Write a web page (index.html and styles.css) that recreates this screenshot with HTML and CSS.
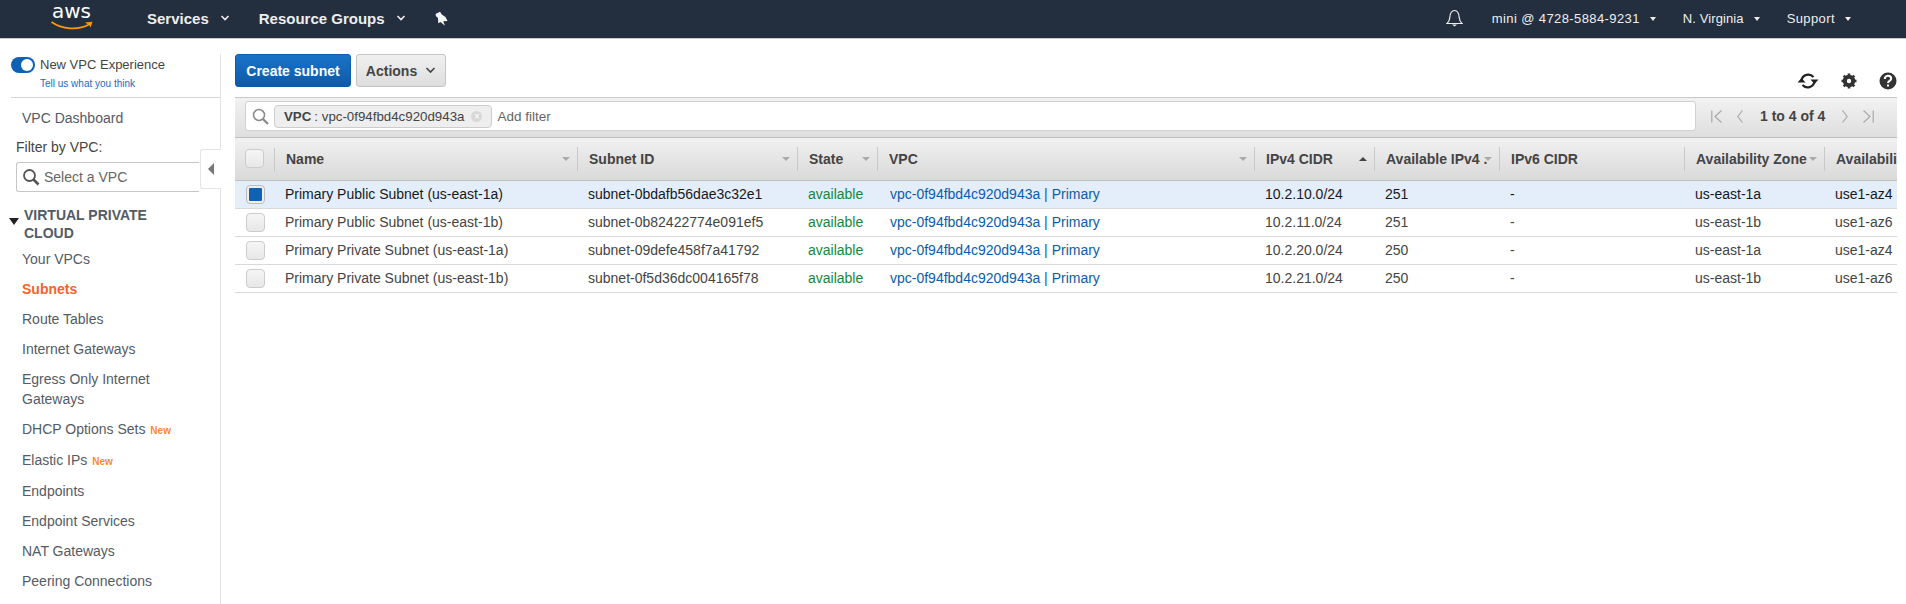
FILE: index.html
```html
<!DOCTYPE html>
<html lang="en">
<head>
    <meta charset="UTF-8">
    <title>Subnets | VPC Management Console</title>
    <link rel="stylesheet" href="styles.css">
</head>
<body>
    <header class="topnav">
        <div class="logo">
            <span class="logo-text">aws</span>
            <svg class="logo-smile" width="42" height="10" viewBox="0 0 42 10">
                <path d="M.5 1C11 8.500 27 9.500 38 3.500" fill="none" stroke="#f90" stroke-width="1.800"/>
                <path d="M34 1.500L41.500 .8L39.500 6.500C39 5 38 4 37.500 3.800Z" fill="#f90"/>
            </svg>
        </div>
        <a class="nav-menu">Services<svg class="nav-chev" width="10" height="6" viewBox="0 0 10 6"><path d="M1.500 1l3.500 3.500L8.500 1" fill="none" stroke="#eee" stroke-width="1.600"/></svg></a>
        <a class="nav-menu nav-groups">Resource Groups<svg class="nav-chev" width="10" height="6" viewBox="0 0 10 6"><path d="M1.500 1l3.500 3.500L8.500 1" fill="none" stroke="#eee" stroke-width="1.600"/></svg></a>
        <svg class="nav-pin" width="13" height="15" viewBox="0 0 13 15"><path d="M.5 3L5 .8L6.800 3.500L10.500 6L12.500 10L8.200 10.200L10 14.800L5.500 11L3.200 12.200L3 7L1 5.200Z" fill="#f4f4f4"/></svg>
        <div class="nav-right">
            <svg class="nav-bell" width="17" height="18" viewBox="0 0 17 18"><path d="M1 14.500c2-1.500 2.500-3 2.800-6C4.100 4.500 5.800 1.500 8.500 1.500s4.400 3 4.700 7c.3 3 .8 4.500 2.800 6z" fill="none" stroke="#eee" stroke-width="1.200"/><path d="M6 15.500h5L8.500 17.500z" fill="#eee"/></svg>
            <a class="nav-small nav-user">mini @ 4728-5884-9231<i class="caret"></i></a>
            <a class="nav-small nav-region">N. Virginia<i class="caret"></i></a>
            <a class="nav-small nav-support">Support<i class="caret"></i></a>
        </div>
    </header>

    <div class="page">
        <aside class="sidebar">
            <div class="experience">
                <div class="toggle-row">
                    <span class="toggle"><span class="toggle-knob"></span></span>
                    <span>New VPC Experience</span>
                </div>
                <a class="feedback">Tell us what you think</a>
            </div>
            <a class="side-link side-dash">VPC Dashboard</a>
            <div class="filter-label">Filter by VPC:</div>
            <div class="select-wrap">
                <div class="vpc-select">
                    <svg width="18" height="18" viewBox="0 0 18 18"><circle cx="7.500" cy="7.500" r="5.500" fill="none" stroke="#555" stroke-width="1.800"/><path d="M11.500 11.500l5 5" stroke="#555" stroke-width="2.600"/></svg>
                    <span>Select a VPC</span>
                </div>
                <div class="collapse-tab"><i></i></div>
            </div>
            <div class="side-section">
                <i class="section-arrow"></i>
                <span>VIRTUAL PRIVATE CLOUD</span>
            </div>
            <ul class="side-list">
                <li class="first">Your VPCs</li>
                <li class="active">Subnets</li>
                <li>Route Tables</li>
                <li>Internet Gateways</li>
                <li>Egress Only Internet Gateways</li>
                <li>DHCP Options Sets <span class="new">New</span></li>
                <li class="tall">Elastic IPs <span class="new">New</span></li>
                <li class="tall">Endpoints</li>
                <li>Endpoint Services</li>
                <li>NAT Gateways</li>
                <li>Peering Connections</li>
            </ul>
        </aside>

        <main class="main">
            <div class="toolbar">
                <button class="btn-primary">Create subnet</button>
                <button class="btn-actions">Actions<svg width="11" height="7" viewBox="0 0 11 7"><path d="M1.500 1l4 4 4-4" fill="none" stroke="#444" stroke-width="1.600"/></svg></button>
                <div class="tool-icons">
                    <svg width="22" height="18" viewBox="0 0 22 18"><path d="M4.500 8A7 7 0 0 1 16.500 5M17.500 10A7 7 0 0 1 5.500 13" fill="none" stroke="#222" stroke-width="2.200"/><path d="M13.500 7.500h8L17.500 12zM.5 10.500h8L4.500 6z" fill="#222"/></svg>
                    <svg width="16" height="16" viewBox="0 0 16 16"><circle cx="8" cy="8" r="4.500" fill="none" stroke="#333" stroke-width="3.500"/><path d="M8 .5v15M.5 8h15M2.700 2.700l10.600 10.600M13.300 2.700L2.700 13.300" stroke="#333" stroke-width="2.600"/><circle cx="8" cy="8" r="2.200" fill="#fff"/></svg>
                    <svg width="18" height="18" viewBox="0 0 18 18"><circle cx="9" cy="9" r="8.500" fill="#333"/><path d="M5.800 7c0-2 1.400-3.200 3.200-3.200s3.200 1 3.200 2.800c0 2.400-3.200 2.200-3.200 4.400" fill="none" stroke="#fff" stroke-width="2"/><rect x="8" y="12.500" width="2" height="2" fill="#fff"/></svg>
                </div>
            </div>

            <section class="panel">
                <div class="filterbar">
                    <div class="searchbox">
                        <svg width="17" height="17" viewBox="0 0 17 17"><circle cx="7" cy="7" r="5.500" fill="none" stroke="#888" stroke-width="1.500"/><path d="M11 11l5 5" stroke="#888" stroke-width="2.200"/></svg>
                        <span class="token"><b>VPC</b> : vpc-0f94fbd4c920d943a<i class="token-x">&times;</i></span>
                        <span class="add-filter">Add filter</span>
                    </div>
                    <div class="pager">
                        <svg width="11" height="13" viewBox="0 0 11 13"><path d="M.8 .5v12M10.500 .5L4 6.500l6.500 6" fill="none" stroke="#aaa" stroke-width="1.200"/></svg>
                        <svg width="6" height="13" viewBox="0 0 6 13"><path d="M5.500 .5L.8 6.500l4.700 6" fill="none" stroke="#aaa" stroke-width="1.200"/></svg>
                        <span class="pager-text">1 to 4 of 4</span>
                        <svg width="6" height="13" viewBox="0 0 6 13"><path d="M.5 .5l4.700 6-4.700 6" fill="none" stroke="#aaa" stroke-width="1.200"/></svg>
                        <svg width="11" height="13" viewBox="0 0 11 13"><path d="M10.200 .5v12M.5 .5L7 6.500l-6.500 6" fill="none" stroke="#aaa" stroke-width="1.200"/></svg>
                    </div>
                </div>

                <table class="grid">
                    <colgroup>
                        <col class="c-check"><col class="c-name"><col class="c-id"><col class="c-state"><col class="c-vpc"><col class="c-cidr"><col class="c-avail"><col class="c-six"><col class="c-zone"><col class="c-zid">
                    </colgroup>
                    <thead>
                        <tr>
                            <th class="check-cell"><span class="check"></span></th>
                            <th><span class="th-in sep">Name<i class="sort"></i></span></th>
                            <th><span class="th-in sep">Subnet ID<i class="sort"></i></span></th>
                            <th><span class="th-in sep">State<i class="sort"></i></span></th>
                            <th><span class="th-in sep">VPC<i class="sort"></i></span></th>
                            <th><span class="th-in sep">IPv4 CIDR<i class="sort up"></i></span></th>
                            <th><span class="th-in sep">Available IPv4 .<i class="sort"></i></span></th>
                            <th><span class="th-in sep">IPv6 CIDR</span></th>
                            <th><span class="th-in sep">Availability Zone<i class="sort"></i></span></th>
                            <th><span class="th-in th-last">Availabili</span></th>
                        </tr>
                    </thead>
                    <tbody>
                        <tr class="selected">
                            <td class="check-cell"><span class="check on"></span></td>
                            <td>Primary Public Subnet (us-east-1a)</td>
                            <td>subnet-0bdafb56dae3c32e1</td>
                            <td class="ok">available</td>
                            <td class="link">vpc-0f94fbd4c920d943a | Primary</td>
                            <td>10.2.10.0/24</td>
                            <td>251</td>
                            <td>-</td>
                            <td>us-east-1a</td>
                            <td>use1-az4</td>
                        </tr>
                        <tr>
                            <td class="check-cell"><span class="check"></span></td>
                            <td>Primary Public Subnet (us-east-1b)</td>
                            <td>subnet-0b82422774e091ef5</td>
                            <td class="ok">available</td>
                            <td class="link">vpc-0f94fbd4c920d943a | Primary</td>
                            <td>10.2.11.0/24</td>
                            <td>251</td>
                            <td>-</td>
                            <td>us-east-1b</td>
                            <td>use1-az6</td>
                        </tr>
                        <tr>
                            <td class="check-cell"><span class="check"></span></td>
                            <td>Primary Private Subnet (us-east-1a)</td>
                            <td>subnet-09defe458f7a41792</td>
                            <td class="ok">available</td>
                            <td class="link">vpc-0f94fbd4c920d943a | Primary</td>
                            <td>10.2.20.0/24</td>
                            <td>250</td>
                            <td>-</td>
                            <td>us-east-1a</td>
                            <td>use1-az4</td>
                        </tr>
                        <tr>
                            <td class="check-cell"><span class="check"></span></td>
                            <td>Primary Private Subnet (us-east-1b)</td>
                            <td>subnet-0f5d36dc004165f78</td>
                            <td class="ok">available</td>
                            <td class="link">vpc-0f94fbd4c920d943a | Primary</td>
                            <td>10.2.21.0/24</td>
                            <td>250</td>
                            <td>-</td>
                            <td>us-east-1b</td>
                            <td>use1-az6</td>
                        </tr>
                    </tbody>
                </table>
            </section>
        </main>
    </div>
</body>
</html>
```

FILE: styles.css
```css
*{
    margin: 0px;
    padding: 0px;
    box-sizing: border-box;
}
html, body{
    height: 604px;
    overflow: hidden;
}
body{
    font-family: "Liberation Sans", Arial, sans-serif;
    font-size: 14px;
    color: #444;
    background: #fff;
}

/* top bar */
.topnav{
    display: flex;
    align-items: center;
    height: 39px;
    padding-bottom: 2px;
    background: #232f3e;
    border-bottom: 1px solid #c9c9c9;
    color: #eee;
}
.logo{
    position: relative;
    align-self: flex-start;
    width: 147px;
    height: 38px;
    flex: none;
}
.logo-text{
    position: absolute;
    left: 52px;
    top: 0px;
    font-family: "DejaVu Sans", sans-serif;
    font-size: 20px;
    line-height: 23px;
    color: #fff;
}
.logo-smile{
    position: absolute;
    left: 51px;
    top: 21px;
}
.nav-menu{
    display: flex;
    align-items: center;
    font-size: 15px;
    font-weight: bold;
    color: #eee;
}
.nav-chev{
    margin-left: 11px;
}
.nav-groups{
    margin-left: 29px;
}
.nav-pin{
    margin-left: 29px;
}
.nav-right{
    display: flex;
    align-items: center;
    margin-left: auto;
}
.nav-bell{
    margin-right: 29px;
}
.nav-small{
    font-size: 13px;
    letter-spacing: .4px;
    color: #eee;
}
.nav-region{
    margin-left: 27px;
    letter-spacing: .1px;
}
.nav-support{
    margin-left: 27px;
    margin-right: 55px;
}
.caret{
    display: inline-block;
    margin-left: 10px;
    vertical-align: 2px;
    border-left: 3.500px solid transparent;
    border-right: 3.500px solid transparent;
    border-top: 4px solid #eee;
}

.page{
    display: flex;
    height: 565px;
}

/* left column */
.sidebar{
    flex: none;
    width: 221px;
    margin-top: 15px;
    padding-left: 11px;
    border-right: 1px solid #e4e4e4;
}
.experience{
    height: 44px;
    border-bottom: 1px solid #d5d5d5;
}
.toggle-row{
    display: flex;
    align-items: center;
    height: 21px;
    color: #444;
    font-size: 13px;
}
.toggle{
    display: flex;
    align-items: center;
    justify-content: flex-end;
    width: 24px;
    height: 16px;
    margin-right: 5px;
    padding-right: 2px;
    border-radius: 8px;
    background: #0f62b3;
}
.toggle-knob{
    width: 12px;
    height: 12px;
    border-radius: 50%;
    background: #fff;
}
.feedback{
    display: block;
    margin: 2px 0 0 29px;
    font-size: 10px;
    line-height: 13px;
    color: #1b6ac2;
}
.side-link{
    display: block;
    color: #545b64;
}
.side-dash{
    margin: 12px 0 0 11px;
    font-size: 14px;
    line-height: 16px;
}
.filter-label{
    margin: 13px 0 0 5px;
    font-size: 14px;
    line-height: 16px;
    color: #444;
}
.select-wrap{
    position: relative;
    margin: 7px 0 0 5px;
}
.vpc-select{
    display: flex;
    align-items: center;
    width: 183px;
    height: 30px;
    padding-left: 5px;
    border: 1px solid #c6c6c6;
    border-right: 0;
    border-radius: 3px 0 0 3px;
    color: #666;
    font-size: 14px;
}
.vpc-select svg{
    margin-right: 4px;
}
.collapse-tab{
    position: absolute;
    left: 184px;
    top: -13px;
    display: flex;
    align-items: center;
    justify-content: center;
    width: 21px;
    height: 40px;
    background: #fff;
    border: 1px solid #e4e4e4;
    border-right: 0;
    border-radius: 3px 0 0 3px;
}
.collapse-tab i{
    border-top: 6px solid transparent;
    border-bottom: 6px solid transparent;
    border-right: 6px solid #777;
}
.side-section{
    position: relative;
    margin-top: 14px;
    padding-left: 13px;
    width: 170px;
    font-size: 14px;
    font-weight: bold;
    line-height: 18px;
    color: #545b64;
}
.section-arrow{
    position: absolute;
    left: -2px;
    top: 12px;
    border-left: 5px solid transparent;
    border-right: 5px solid transparent;
    border-top: 7px solid #222;
}
.side-list{
    list-style: none;
    margin-left: 11px;
    width: 170px;
    font-size: 14px;
    line-height: 20px;
    color: #545b64;
}
.side-list li{
    margin-top: 10px;
}
.side-list .first{
    margin-top: 7px;
}
.side-list .active{
    color: #f2642a;
    font-weight: bold;
}
.side-list .tall{
    margin-top: 11px;
}
.new{
    margin-left: 1px;
    font-size: 10px;
    font-weight: bold;
    line-height: 1;
    color: #ff8b1f;
}

/* right part */
.main{
    flex: 1;
    min-width: 0;
    padding: 0 9px 0 14px;
}
.toolbar{
    display: flex;
    align-items: flex-start;
    height: 58px;
    padding-top: 15px;
}
.btn-primary{
    width: 116px;
    height: 33px;
    border: 1px solid #0d5cab;
    border-radius: 3px;
    background: linear-gradient(#1a73c8, #0e5aa8);
    color: #fff;
    font: bold 14px "Liberation Sans", Arial, sans-serif;
}
.btn-actions{
    display: flex;
    align-items: center;
    justify-content: center;
    width: 90px;
    height: 33px;
    margin-left: 5px;
    border: 1px solid #c4c4c4;
    border-radius: 3px;
    background: linear-gradient(#f0f0f0, #dedede);
    color: #444;
    font: bold 14px "Liberation Sans", Arial, sans-serif;
}
.btn-actions svg{
    margin-left: 8px;
}
.tool-icons{
    display: flex;
    align-items: center;
    gap: 22px;
    margin-left: auto;
    padding-top: 18px;
}
.panel{
    border-top: 1px solid #c9c9c9;
}
.filterbar{
    display: flex;
    align-items: flex-start;
    height: 40px;
    padding: 3px 0 0 10px;
    background: linear-gradient(#f2f2f2, #dedede);
    border-bottom: 1px solid #c0c0c0;
}
.searchbox{
    display: flex;
    align-items: center;
    width: 1451px;
    height: 30px;
    padding-left: 6px;
    border: 1px solid #d0d0d0;
    border-radius: 3px;
    background: #fff;
}
.token{
    display: flex;
    align-items: center;
    height: 23px;
    margin-left: 5px;
    padding: 0 9px;
    border: 1px solid #ccc;
    border-radius: 4px;
    background: #eee;
    color: #444;
    font-size: 13.300px;
}
.token b{
    margin-right: 3px;
}
.token-x{
    width: 11px;
    height: 11px;
    margin-left: 7px;
    border-radius: 50%;
    background: #d8d8d8;
    color: #fff;
    font-style: normal;
    font-size: 10px;
    line-height: 11px;
    text-align: center;
}
.add-filter{
    margin-left: 5px;
    color: #666;
    font-size: 13.500px;
}
.pager{
    display: flex;
    align-items: center;
    gap: 15px;
    height: 30px;
    margin-left: 15px;
}
.pager-text{
    margin: 0 2px;
    font-weight: bold;
    font-size: 14px;
    color: #444;
}

/* table */
.grid{
    width: 1662px;
    table-layout: fixed;
    border-collapse: collapse;
}
.c-check{ width: 40px; }
.c-name{ width: 303px; }
.c-id{ width: 220px; }
.c-state{ width: 80px; }
.c-vpc{ width: 377px; }
.c-cidr{ width: 120px; }
.c-avail{ width: 125px; }
.c-six{ width: 185px; }
.c-zone{ width: 140px; }
.c-zid{ width: 72px; }
.grid th{
    height: 42px;
    padding: 0;
    background: linear-gradient(#f1f1f1, #d9d9d9);
    border-bottom: 1px solid #c0c0c0;
    text-align: left;
    font-size: 14px;
    color: #444;
}
.th-in{
    position: relative;
    display: flex;
    align-items: center;
    height: 24px;
    padding: 0 18px 0 11px;
    white-space: nowrap;
    overflow: hidden;
}
.th-last{
    padding-right: 0;
}
.sep{
    border-right: 1px solid #c9c9c9;
}
.sort{
    position: absolute;
    right: 7px;
    top: 10px;
    border-left: 4px solid transparent;
    border-right: 4px solid transparent;
    border-top: 4px solid #aaa;
}
.sort.up{
    border-top: 0;
    border-bottom: 4px solid #444;
}
.grid td{
    height: 28px;
    padding: 0 0 0 10px;
    border-bottom: 1px solid #d9d9d9;
    white-space: nowrap;
    overflow: hidden;
    font-size: 14px;
    color: #444;
}
.grid th.check-cell{
    position: relative;
    padding-left: 10px;
}
.grid td.check-cell{
    padding-left: 11px;
}
th.check-cell::after{
    content: "";
    position: absolute;
    right: 0;
    top: 10px;
    height: 24px;
    border-right: 1px solid #c9c9c9;
}
.check{
    display: block;
    width: 19px;
    height: 19px;
    border: 1px solid #ccc;
    border-radius: 4px;
    background: linear-gradient(#f5f5f5, #e8e8e8);
}
.check.on{
    border: 3px solid #eee;
    outline: 1px solid #bbb;
    outline-offset: -1px;
    background: #0f62b3;
}
.selected td{
    background: #e4eefa;
    color: #16191f;
}
.grid .ok{
    color: #16873a;
}
.grid .link{
    padding-left: 12px;
    color: #0b5cad;
}
```
